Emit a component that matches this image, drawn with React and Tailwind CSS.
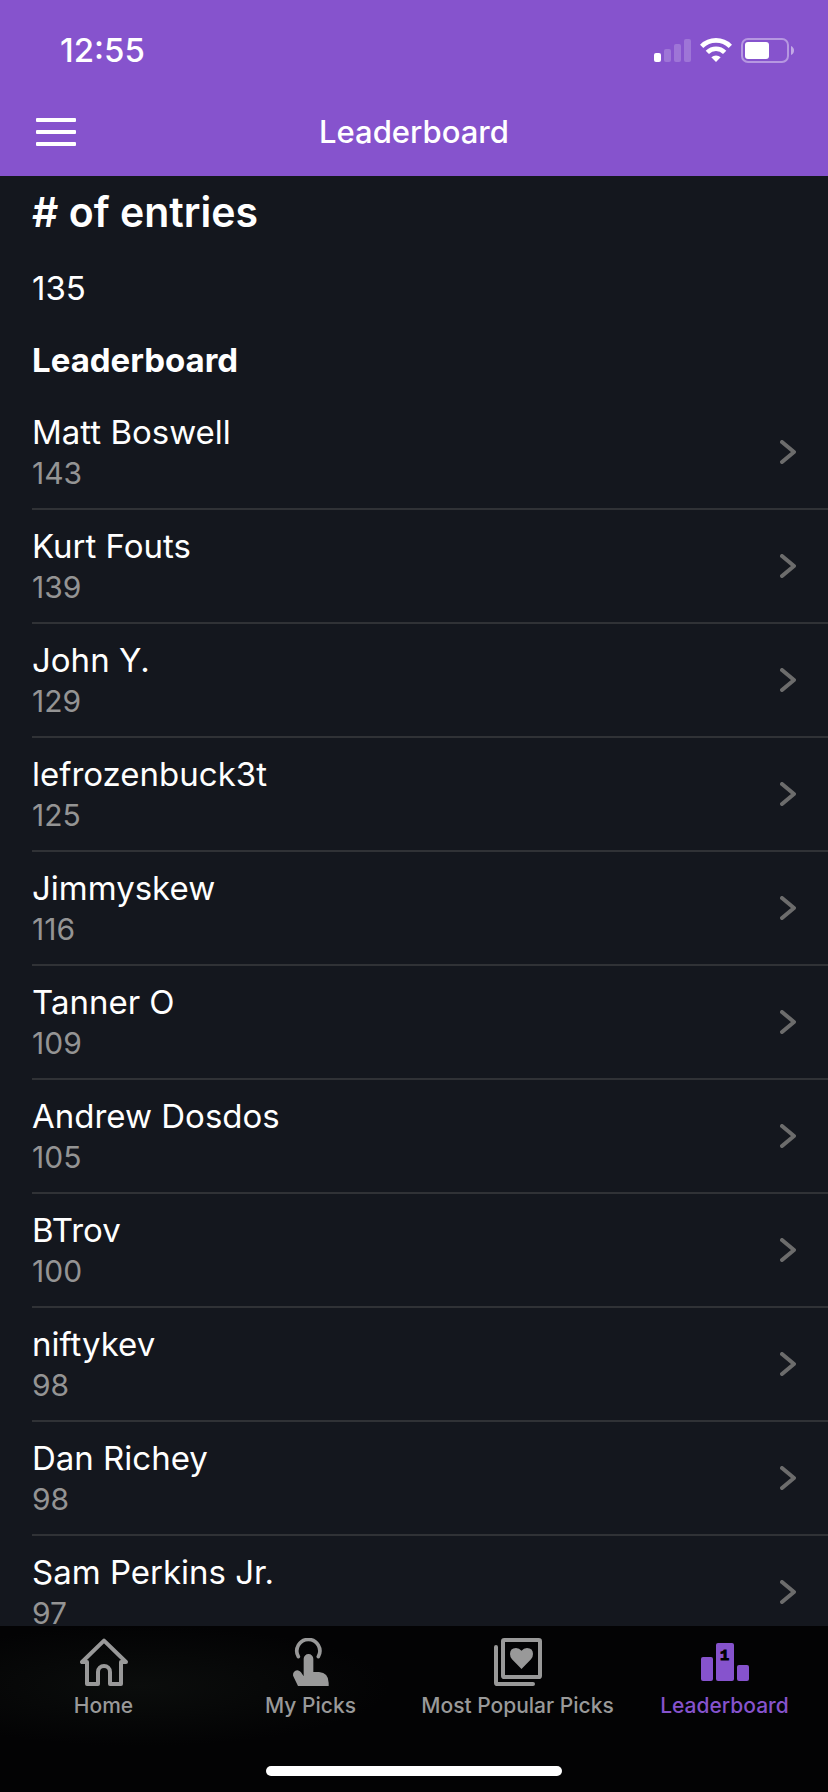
import React from 'react';

const players = [
  { name: 'Matt Boswell', score: 143 },
  { name: 'Kurt Fouts', score: 139 },
  { name: 'John Y.', score: 129 },
  { name: 'lefrozenbuck3t', score: 125 },
  { name: 'Jimmyskew', score: 116 },
  { name: 'Tanner O', score: 109 },
  { name: 'Andrew Dosdos', score: 105 },
  { name: 'BTrov', score: 100 },
  { name: 'niftykev', score: 98 },
  { name: 'Dan Richey', score: 98 },
  { name: 'Sam Perkins Jr.', score: 97 },
];

function SignalIcon() {
  return (
    <svg className="h-6 w-[37px]" viewBox="0 0 37 24" fill="currentColor" aria-hidden="true">
      <rect x="0" y="15" width="7" height="9" rx="2" />
      <rect x="10" y="11" width="7" height="13" rx="2" opacity="0.2" />
      <rect x="20" y="6" width="7" height="18" rx="2" opacity="0.2" />
      <rect x="30" y="1" width="7" height="23" rx="2" opacity="0.2" />
    </svg>
  );
}

function WifiIcon() {
  return (
    <svg className="h-6 w-8" viewBox="0 0 96 72" fill="none" stroke="currentColor" strokeWidth="14" aria-hidden="true">
      <path d="M5 25 A61 61 0 0 1 91 25" />
      <path d="M22 43 A37 37 0 0 1 74 43" />
      <path d="M48 72 L34 58 A20 20 0 0 1 62 58 Z" fill="currentColor" stroke="none" />
    </svg>
  );
}

function BatteryIcon() {
  return (
    <svg className="h-[25px] w-[53px]" viewBox="0 0 53 25" aria-hidden="true">
      <rect x="1" y="1" width="46" height="23" rx="6" fill="none" stroke="white" strokeWidth="2" opacity="0.4" />
      <rect x="4" y="4" width="24" height="17" rx="3" fill="white" />
      <path d="M50 8 Q53 9.500 53 12.500 Q53 15.500 50 17 Z" fill="white" opacity="0.5" />
    </svg>
  );
}

function HomeIcon() {
  return (
    <svg className="size-12" viewBox="0 0 144 144" fill="none" stroke="currentColor" strokeWidth="12" strokeLinejoin="round" aria-hidden="true">
      <path d="M72 8 L6 72 H21 V138 H54 V102 a18 18 0 0 1 36 0 V138 H123 V72 H138 Z" />
    </svg>
  );
}

function TouchIcon() {
  return (
    <svg className="size-12" viewBox="0 0 144 144" fill="currentColor" aria-hidden="true">
      <path d="M34 56 A34.500 34.500 0 1 1 94 56" fill="none" stroke="currentColor" strokeWidth="11" strokeLinecap="round" />
      <path d="M33 144 L20 117 A12.500 12.500 0 0 1 42 103 L50 115 V62.500 a14.500 14.500 0 0 1 29 0 V102 H96 Q125 104 125 135 V144 Z" />
    </svg>
  );
}

function PopularIcon() {
  return (
    <svg className="size-12" viewBox="0 0 144 144" fill="none" stroke="currentColor" strokeWidth="12" strokeLinecap="round" strokeLinejoin="round" aria-hidden="true">
      <rect x="27" y="6" width="111" height="111" rx="4" />
      <path d="M6 27 V134 Q6 138 10 138 H117" />
      <path
        d="M82.500 93 L54 64 Q48 57 48 48 Q48 30 66 30 Q76 30 82.500 38 Q89 30 99 30 Q117 30 117 48 Q117 57 111 64 Z"
        fill="currentColor"
        stroke="none"
      />
    </svg>
  );
}

function PodiumIcon() {
  return (
    <svg className="size-12" viewBox="0 0 144 144" fill="currentColor" aria-hidden="true">
      <rect x="0" y="57" width="36" height="72" rx="6" />
      <rect x="45" y="15" width="54" height="114" rx="6" />
      <rect x="108" y="81" width="36" height="48" rx="6" />
      <text x="71" y="65" textAnchor="middle" fontSize="46" strokeWidth="3" className="fill-black stroke-black font-['Liberation_Mono'] font-bold">1</text>
    </svg>
  );
}

const tabs = [
  { label: 'Home', Icon: HomeIcon },
  { label: 'My Picks', Icon: TouchIcon },
  { label: 'Most Popular Picks', Icon: PopularIcon },
  { label: 'Leaderboard', Icon: PodiumIcon, active: true },
];

function PlayerRow({ name, score }) {
  return (
    <li className="border-b-2 border-[#303236]">
      <a href="#" className="flex h-28 items-center justify-between pr-8">
        <span className="pt-0.5">
          <span className="block text-[33px] leading-[41px] text-white">{name}</span>
          <span className="block text-[30px] leading-[41px] text-[#949494]">{score}</span>
        </span>
        <svg className="h-6 w-4" viewBox="0 0 16 24" fill="none" stroke="#6c6c6c" strokeWidth="4" strokeLinecap="round" strokeLinejoin="round" aria-hidden="true">
          <path d="M2 2 L14 12 L2 22" />
        </svg>
      </a>
    </li>
  );
}

export default function App() {
  return (
    <div className="flex h-screen flex-col bg-[#14171e] font-['Inter',sans-serif] text-white">
      <header className="bg-[#8653cd]">
        <div className="flex h-22 items-center justify-between pt-3 pr-[34px] pl-15">
          <span className="text-[33px] leading-10 font-medium">12:55</span>
          <div className="flex items-center gap-[9px]">
            <SignalIcon />
            <WifiIcon />
            <BatteryIcon />
          </div>
        </div>
        <div className="grid h-22 grid-cols-[1fr_auto_1fr] items-center px-9">
          <button type="button" aria-label="Open menu" className="flex w-10 flex-col gap-2">
            <span className="h-1 w-full rounded-[1px] bg-white" />
            <span className="h-1 w-full rounded-[1px] bg-white" />
            <span className="h-1 w-full rounded-[1px] bg-white" />
          </button>
          <h1 className="text-[31px] leading-10 font-medium">Leaderboard</h1>
        </div>
      </header>

      <main className="min-h-0 flex-1 overflow-y-auto pl-8 [scrollbar-width:none]">
        <h2 className="pt-3 text-[41px] leading-12 font-semibold"># of entries</h2>
        <p className="mt-8 text-[33px] leading-10">135</p>
        <h3 className="mt-8 mb-4 text-[33px] leading-10 font-bold">Leaderboard</h3>
        <ul>
          {players.map((player) => (
            <PlayerRow key={player.name} name={player.name} score={player.score} />
          ))}
        </ul>
      </main>

      <nav className="bg-[#030304] bg-[radial-gradient(ellipse_250px_60px_at_140px_60px,#0b0d0c,transparent)] pt-3 pb-4">
        <div className="grid grid-cols-4">
          {tabs.map(({ label, Icon, active }) => (
            <a
              key={label}
              href="#"
              aria-current={active ? 'page' : undefined}
              className={`flex flex-col items-center gap-2 text-[21px] leading-6 font-medium whitespace-nowrap ${
                active ? 'text-[#8653cd]' : 'text-[#999999]'
              }`}
            >
              <Icon />
              {label}
            </a>
          ))}
        </div>
        <div className="mx-auto mt-12 h-[10px] w-[296px] rounded-full bg-white" />
      </nav>
    </div>
  );
}
